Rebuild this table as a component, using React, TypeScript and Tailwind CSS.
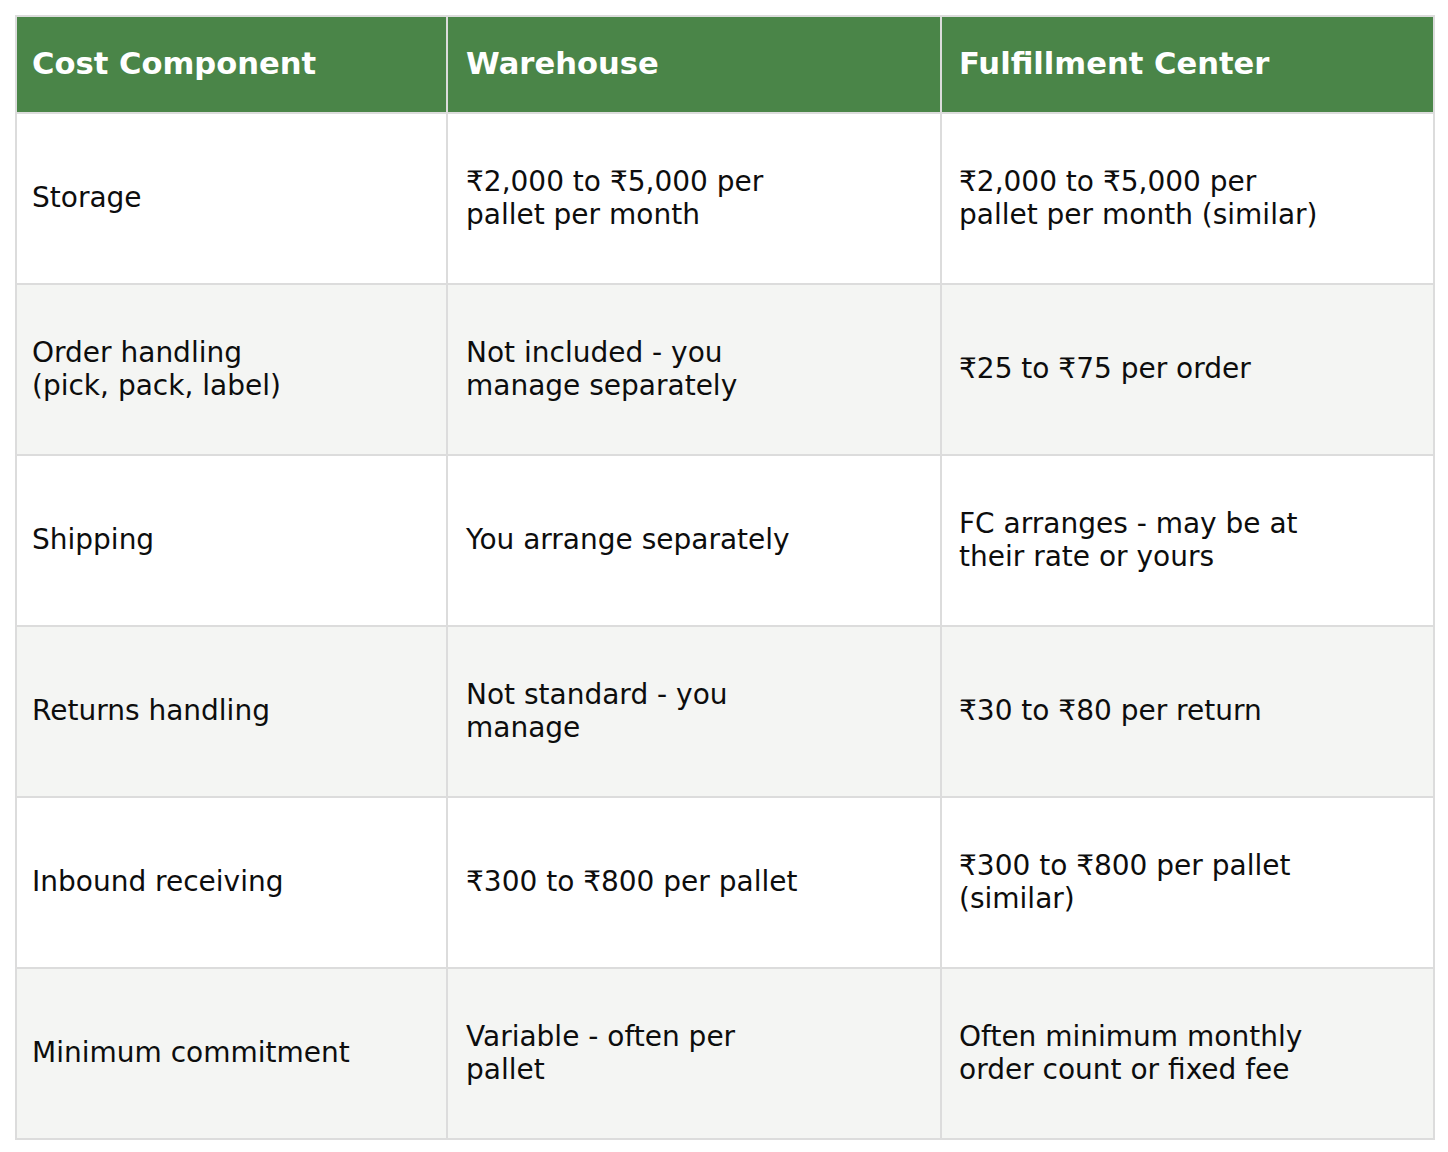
const rows: [string[], string[], string[]][] = [
  [["Storage"], ["₹2,000 to ₹5,000 per", "pallet per month"], ["₹2,000 to ₹5,000 per", "pallet per month (similar)"]],
  [["Order handling", "(pick, pack, label)"], ["Not included - you", "manage separately"], ["₹25 to ₹75 per order"]],
  [["Shipping"], ["You arrange separately"], ["FC arranges - may be at", "their rate or yours"]],
  [["Returns handling"], ["Not standard - you", "manage"], ["₹30 to ₹80 per return"]],
  [["Inbound receiving"], ["₹300 to ₹800 per pallet"], ["₹300 to ₹800 per pallet", "(similar)"]],
  [["Minimum commitment"], ["Variable - often per", "pallet"], ["Often minimum monthly", "order count or fixed fee"]],
];

const pads = ["pl-[15px]", "pl-[18px]", "pl-[17px]"];

const Lines = ({ lines }: { lines: string[] }) => (
  <div>
    {lines.map((l, i) => (
      <div key={i}>{l}</div>
    ))}
  </div>
);

export default function App() {
  return (
    <div className="min-h-[1152px] bg-white pt-[15px] pl-[15px]" style={{ fontFamily: '"DejaVu Sans", sans-serif' }}>
      <div className="grid w-[1420px] grid-cols-[429px_492px_491px] gap-[2px] bg-[#dcdcdc] p-[2px]">
        {["Cost Component", "Warehouse", "Fulfillment Center"].map((h, i) => (
          <div key={h} className={`flex h-[95px] items-center bg-[#4a8548] ${pads[i]} pb-[2px] text-[30.6px] font-bold text-white`}>
            {h}
          </div>
        ))}
        {rows.map((r, ri) =>
          r.map((cell, ci) => (
            <div
              key={`${ri}-${ci}`}
              className={`flex h-[169px] items-center ${pads[ci]} text-[28px] leading-[32.5px] text-[#0d0d0d] ${ri % 2 === 1 ? "bg-[#f4f5f3]" : "bg-white"}`}
            >
              <Lines lines={cell} />
            </div>
          ))
        )}
      </div>
    </div>
  );
}
